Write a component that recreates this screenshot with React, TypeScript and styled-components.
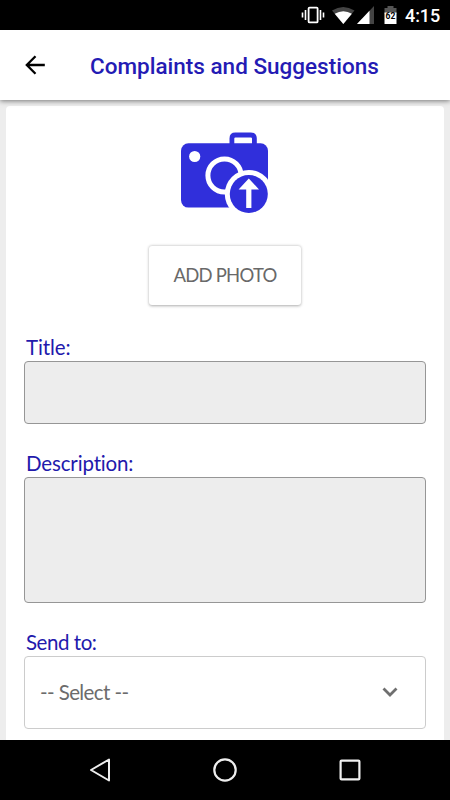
import React from "react";
import styled, { createGlobalStyle } from "styled-components";

const GlobalStyle = createGlobalStyle`
  * { box-sizing: border-box; }
  html, body { margin: 0; padding: 0; overflow: hidden; }
  svg { display: block; flex: none; }
`;

const Screen = styled.div`
  width: 450px;
  height: 800px;
  display: flex;
  flex-direction: column;
  overflow: hidden;
  background: #ededed;
  font-family: Lato, sans-serif;
  font-variant-ligatures: none;
`;

const StatusBar = styled.div`
  flex: none;
  height: 30px;
  display: flex;
  justify-content: flex-end;
  align-items: center;
  padding-right: 10px;
  background: #000;
`;

const Clock = styled.span`
  width: 35px;
  font: 500 18px/30px Roboto, sans-serif;
  letter-spacing: -0.1px;
  color: #fff;
  padding-top: 2px;
  white-space: nowrap;
`;

const Header = styled.header`
  flex: none;
  position: relative;
  height: 70px;
  display: flex;
  align-items: center;
  padding-left: 25px;
  background: #fff;
  box-shadow: 0 1px 5px rgba(0, 0, 0, 0.5);
`;

const BackButton = styled.button`
  width: 65px;
  padding: 0;
  border: 0;
  background: none;
`;

const PageTitle = styled.h1`
  margin: 2px 0 0;
  font: 500 22.5px/30px Roboto, sans-serif;
  color: #241bb4;
  white-space: nowrap;
`;

const Content = styled.main`
  flex: 1;
  min-height: 0;
  padding: 6px 6px 0;
  overflow: hidden;
`;

const Card = styled.section`
  height: 640px;
  display: flex;
  flex-direction: column;
  padding: 26px 18px 0;
  border-radius: 4px;
  background: #fff;
`;

const CameraIcon = styled.svg`
  align-self: center;
  margin-right: 1px;
`;

const PhotoButton = styled.button`
  flex: none;
  align-self: center;
  width: 152px;
  height: 59px;
  margin: 33px 0 31px;
  padding: 0;
  border: 0;
  border-radius: 3px;
  background: #fff;
  box-shadow: 0 0.5px 3px rgba(0, 0, 0, 0.33);
  font: 400 18.5px/59px Lato, sans-serif;
  letter-spacing: -0.78px;
  color: #696969;
`;

const Field = styled.div<{ $gap?: number }>`
  flex: none;
  display: flex;
  flex-direction: column;
  margin-bottom: ${(p) => p.$gap ?? 0}px;
`;

const Label = styled.label<{ $tracking: number }>`
  height: 25px;
  padding-left: 2px;
  font-size: 20.5px;
  line-height: 22px;
  letter-spacing: ${(p) => p.$tracking}px;
  color: #2219ac;
`;

const TextBox = styled.textarea<{ $height: number }>`
  display: block;
  width: 402px;
  height: ${(p) => p.$height}px;
  padding: 12px;
  border: 1px solid #969696;
  border-radius: 4px;
  background: #ededed;
  resize: none;
  outline: 0;
  font: 400 20px Lato, sans-serif;
`;

const SelectBox = styled.div`
  width: 402px;
  height: 73px;
  display: flex;
  align-items: center;
  justify-content: space-between;
  padding: 0 27px 0 15px;
  border: 1px solid #ccc;
  border-radius: 4px;
  font-size: 20.5px;
  letter-spacing: -0.6px;
  color: #6c6c6c;
`;

const SelectValue = styled.span`
  padding-bottom: 2px;
`;

const NavBar = styled.nav`
  flex: none;
  height: 60px;
  display: flex;
  align-items: center;
  justify-content: space-between;
  padding: 0 88px;
  background: #000;
`;

export default function App() {
  return (
    <>
      <GlobalStyle />
      <Screen>
        <StatusBar>
          <svg width="105" height="30" viewBox="300 0 105 30">
            <path d="M302.5 12.5v5M305.5 10v10M320.5 10v10M323.5 12.5v5" stroke="#fff" strokeWidth="1.6" />
            <rect x="308.6" y="7.6" width="9" height="14.8" rx="1" fill="none" stroke="#fff" strokeWidth="1.8" />
            <path d="M332 10.5Q343.3 3.5 354.5 10.5L343.3 24Z" fill="#444" />
            <path d="M334.7 13.8Q343.3 8.5 351.9 13.8L343.3 24Z" fill="#fff" />
            <path d="M374 6v18h-17Z" fill="#444" />
            <path d="M369.5 10.8V24H357Z" fill="#fff" />
            <path d="M387.5 6h6v2h3v6h-12V8h3Z" fill="#555" />
            <path d="M384.5 12.5h12V24h-12Z" fill="#fff" />
            <text x="390.5" y="18.7" textAnchor="middle" fontFamily="Roboto, sans-serif" fontSize="8.5" fontWeight="700" fill="#000">62</text>
          </svg>
          <Clock>4:15</Clock>
        </StatusBar>
        <Header>
          <BackButton aria-label="Back">
            <svg width="20" height="20" viewBox="0 0 20 20" fill="none" stroke="#000" strokeWidth="2.3">
              <path d="M19.8 10H2M10.5 1.2L1.8 10l8.7 8.8" />
            </svg>
          </BackButton>
          <PageTitle>Complaints and Suggestions</PageTitle>
        </Header>
        <Content>
          <Card>
            <CameraIcon width="87" height="81" viewBox="181 132 87 81">
              <path d="M231.900 145v-6.500q0-3.500 3.500-3.500h15.500q3.500 0 3.500 3.500v6.500" fill="none" stroke="#302fdb" strokeWidth="4.800" />
              <rect x="181" y="143.300" width="87" height="64.300" rx="7.500" fill="#302fdb" />
              <circle cx="194.700" cy="156.500" r="5.600" fill="#fff" />
              <circle cx="224.500" cy="175.500" r="16.600" fill="none" stroke="#fff" strokeWidth="5" />
              <circle cx="248.800" cy="194" r="24" fill="#fff" />
              <circle cx="248.800" cy="194" r="19" fill="#302fdb" />
              <path d="M248.800 178.500L259 189.500h-7.600V208h-5.200v-18.500h-7.600Z" fill="#fff" />
            </CameraIcon>
            <PhotoButton>ADD PHOTO</PhotoButton>
            <Field $gap={28}>
              <Label htmlFor="title" $tracking={-0.1}>Title:</Label>
              <TextBox id="title" $height={63} />
            </Field>
            <Field $gap={28}>
              <Label htmlFor="description" $tracking={-0.15}>Description:</Label>
              <TextBox id="description" $height={126} />
            </Field>
            <Field>
              <Label $tracking={-0.45}>Send to:</Label>
              <SelectBox>
                <SelectValue>-- Select --</SelectValue>
                <svg width="16" height="16" viewBox="0 0 16 16" fill="none" stroke="#6f6f6f" strokeWidth="2.800">
                  <path d="M1.500 3.500L8 10l6.500-6.500" />
                </svg>
              </SelectBox>
            </Field>
          </Card>
        </Content>
        <NavBar>
          <svg width="24" height="26" viewBox="0 0 24 26" fill="none" stroke="#eee" strokeWidth="2" strokeLinejoin="round">
            <path d="M21 2.500v21L3 13Z" />
          </svg>
          <svg width="24" height="24" viewBox="0 0 24 24" fill="none" stroke="#eee" strokeWidth="2.200">
            <circle cx="12" cy="12" r="10.700" />
          </svg>
          <svg width="24" height="24" viewBox="0 0 24 24" fill="none" stroke="#eee" strokeWidth="2.200">
            <rect x="2.600" y="2.600" width="18.800" height="18.800" rx="1" />
          </svg>
        </NavBar>
      </Screen>
    </>
  );
}
